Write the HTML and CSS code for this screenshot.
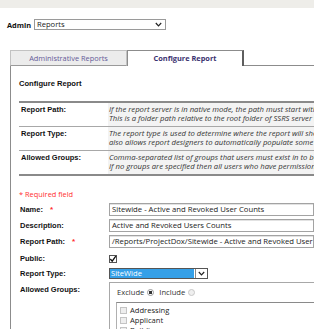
FILE: index.html
```html
<!DOCTYPE html>
<html>
<head>
<meta charset="utf-8">
<link rel="stylesheet" href="styles.css">
</head>
<body>
<div class="topbar"></div>
<div class="admin">
  <span class="admin-label">Admin</span>
  <div class="select">
    <span>Reports</span>
    <svg class="chev" width="7" height="5" viewBox="0 0 7 5"><path d="M0.8 1 L3.5 3.8 L6.2 1" fill="none" stroke="#222" stroke-width="1.2"/></svg>
  </div>
</div>
<div class="tabs">
  <div class="tab tab-inactive">Administrative Reports</div>
  <div class="tab tab-active">Configure Report</div>
  <div class="tab-fill"></div>
</div>
<div class="panel">
  <div class="heading">Configure Report</div>
  <div class="info">
    <div class="info-row">
      <div class="info-label">Report Path:</div>
      <div class="info-desc">
        <div>If the report server is in native mode, the path must start with /Reports and be followed by</div>
        <div>This is a folder path relative to the root folder of SSRS server where reports are deployed.</div>
      </div>
    </div>
    <div class="info-row">
      <div class="info-label">Report Type:</div>
      <div class="info-desc">
        <div>The report type is used to determine where the report will show in the application. It</div>
        <div>also allows report designers to automatically populate some of the parameters.</div>
      </div>
    </div>
    <div class="info-row">
      <div class="info-label">Allowed Groups:</div>
      <div class="info-desc">
        <div>Comma-separated list of groups that users must exist in to be able to see the report.</div>
        <div>If no groups are specified then all users who have permission can see the report.</div>
      </div>
    </div>
  </div>
  <div class="required">* Required field</div>
  <div class="form">
    <div class="frow">
      <div class="flabel">Name:<span class="star">*</span></div>
      <div class="input">Sitewide - Active and Revoked User Counts</div>
    </div>
    <div class="frow">
      <div class="flabel">Description:</div>
      <div class="input">Active and Revoked Users Counts</div>
    </div>
    <div class="frow">
      <div class="flabel">Report Path:<span class="star">*</span></div>
      <div class="input">/Reports/ProjectDox/Sitewide - Active and Revoked User Counts</div>
    </div>
    <div class="frow frow-public">
      <div class="flabel">Public:</div>
      <div class="check">
        <svg width="8" height="8" viewBox="0 0 8 8"><path d="M1.3 4 L3.2 6.2 L6.8 1.2" fill="none" stroke="#111" stroke-width="1.3"/></svg>
      </div>
    </div>
    <div class="frow frow-type">
      <div class="flabel">Report Type:</div>
      <div class="typesel">
        <span class="typesel-val">SiteWide</span>
        <span class="typesel-btn"><svg width="7" height="5" viewBox="0 0 7 5"><path d="M0.8 1 L3.5 3.8 L6.2 1" fill="none" stroke="#222" stroke-width="1.2"/></svg></span>
      </div>
    </div>
    <div class="frow frow-groups">
      <div class="flabel flabel-top">Allowed Groups:</div>
      <div class="groups">
        <div class="mode">
          <span>Exclude</span><span class="radio radio-on"></span>
          <span class="inc">Include</span><span class="radio"></span>
        </div>
        <div class="list">
          <div class="item"><span class="box"></span>Addressing</div>
          <div class="item"><span class="box"></span>Applicant</div>
          <div class="item"><span class="box"></span>Building</div>
        </div>
      </div>
    </div>
  </div>
</div>
</body>
</html>
```

FILE: styles.css
```css
html, body {
  margin: 0;
  padding: 0;
  overflow: hidden;
  background: #fff;
}
body {
  width: 314px;
  height: 329px;
  font-family: "Open Sans", sans-serif;
  font-size: 7.4px;
  color: #222;
}
.topbar {
  height: 8px;
  background: #eeede9;
}
.admin {
  display: flex;
  align-items: center;
  margin: 11px 0 0 7px;
  height: 11px;
}
.admin-label {
  font-weight: bold;
  width: 27px;
  color: #111;
}
.select {
  width: 132px;
  height: 11px;
  box-sizing: border-box;
  border: 1px solid #9a9a9a;
  display: flex;
  align-items: center;
  justify-content: space-between;
  padding: 0 3px 0 2px;
  line-height: 9px;
  font-size: 7.6px;
}
.chev { display: block; }
.tabs {
  display: flex;
  margin: 20px 0 0 10px;
  height: 16px;
}
.tab {
  box-sizing: border-box;
  width: 117px;
  height: 16px;
  text-align: center;
  line-height: 14px;
}
.tab-inactive {
  background: #ececec;
  border: 1px solid #c2c2c2;
  border-bottom: 1px solid #9a9a9a;
  color: #655b98;
}
.tab-active {
  background: #fff;
  border: 1px solid #8c8c8c;
  border-right: 2px solid #5e5e5e;
  border-bottom: none;
  font-weight: bold;
  color: #3b3270;
}
.tab-fill {
  flex: 1;
  border-bottom: 1px solid #8c8c8c;
}
.panel {
  margin-left: 10px;
  border-left: 1px solid #8c8c8c;
  padding-left: 8px;
  height: 300px;
}
.heading {
  font-family: "Liberation Sans", Arial, sans-serif;
  font-weight: bold;
  font-size: 7.6px;
  line-height: 9px;
  padding-top: 13px;
  margin-bottom: 13px;
  color: #111;
}
.info {
  width: 400px;
  border-top: 2px solid #8a8a8a;
  border-bottom: 2px solid #8a8a8a;
}
.info-row {
  display: flex;
  border-bottom: 1px solid #a8a8a8;
}
.info-row:last-child { border-bottom: none; }
.info-label {
  width: 87px;
  padding: 2px 0 0 2px;
  font-family: "Liberation Sans", Arial, sans-serif;
  font-weight: bold;
  font-size: 7.5px;
  line-height: 9px;
  color: #111;
}
.info-desc {
  flex: 1;
  background: #f3f3f3;
  padding: 2px 0 3px 1px;
  font-style: italic;
  font-size: 7.7px;
  line-height: 9px;
  color: #333;
  white-space: nowrap;
  overflow: hidden;
}
.required {
  margin-top: 14px;
  line-height: 9px;
  color: #ff2e2e;
}
.form {
  margin-top: 4px;
  margin-left: 1px;
}
.frow {
  display: flex;
  align-items: center;
  height: 13px;
  margin-bottom: 3px;
}
.flabel {
  width: 89px;
  flex: none;
  font-family: "Liberation Sans", Arial, sans-serif;
  font-weight: bold;
  font-size: 7.5px;
  line-height: 9px;
  color: #111;
}
.star {
  color: #ff2e2e;
  margin-left: 7px;
  font-size: 8px;
}
.input {
  width: 260px;
  height: 13px;
  box-sizing: border-box;
  border: 1px solid #a3a3a3;
  box-shadow: inset 0 1px 0 #e2e2e2;
  padding-left: 2px;
  line-height: 11px;
  font-size: 7.7px;
  white-space: nowrap;
  overflow: hidden;
  color: #222;
}
.frow-public {
  height: 15px;
  margin-bottom: 2px;
}
.check {
  width: 8px;
  height: 8px;
  box-sizing: border-box;
  border: 1px solid #555;
  background: #fff;
  position: relative;
}
.check svg {
  position: absolute;
  left: -1px;
  top: -1px;
}
.frow-type {
  height: 11px;
  margin-bottom: 3px;
}
.typesel {
  width: 99px;
  height: 11px;
  box-sizing: border-box;
  border: 1px solid #555;
  display: flex;
  background: #fff;
}
.typesel-val {
  flex: 1;
  background: #35a0e8;
  color: #fff;
  line-height: 9px;
  padding-left: 1px;
  margin: 0 1px 0 0;
  font-size: 7.6px;
}
.typesel-btn {
  width: 11px;
  display: flex;
  align-items: center;
  justify-content: center;
  border-left: 1px solid #888;
}
.frow-groups {
  align-items: flex-start;
  height: auto;
}
.flabel-top {
  padding-top: 3px;
}
.groups {
  width: 260px;
  border: 1px solid #a8a8a8;
  border-right: none;
  padding: 5px 0 0 6px;
  height: 60px;
}
.mode {
  display: flex;
  align-items: center;
  height: 9px;
  line-height: 9px;
  margin-left: 1px;
  font-size: 7.6px;
  color: #333;
}
.radio {
  width: 7px;
  height: 7px;
  box-sizing: border-box;
  border-radius: 50%;
  border: 1px solid #c8c8c8;
  background: #efefef;
  margin-left: 3px;
}
.radio-on {
  border-color: #9a9a9a;
  background: radial-gradient(circle, #333 0 1.5px, #fff 1.8px);
}
.inc { margin-left: 5px; }
.list {
  margin-top: 5px;
  border-top: 1px solid #8a8a8a;
  border-left: 1px solid #b0b0b0;
  padding: 2px 0 0 3px;
}
.item {
  display: flex;
  align-items: center;
  height: 10px;
  line-height: 10px;
  font-size: 7.6px;
  color: #222;
}
.box {
  width: 7px;
  height: 7px;
  box-sizing: border-box;
  border: 1px solid #c4c4c4;
  background: #eeeeee;
  margin-right: 3px;
}
```
